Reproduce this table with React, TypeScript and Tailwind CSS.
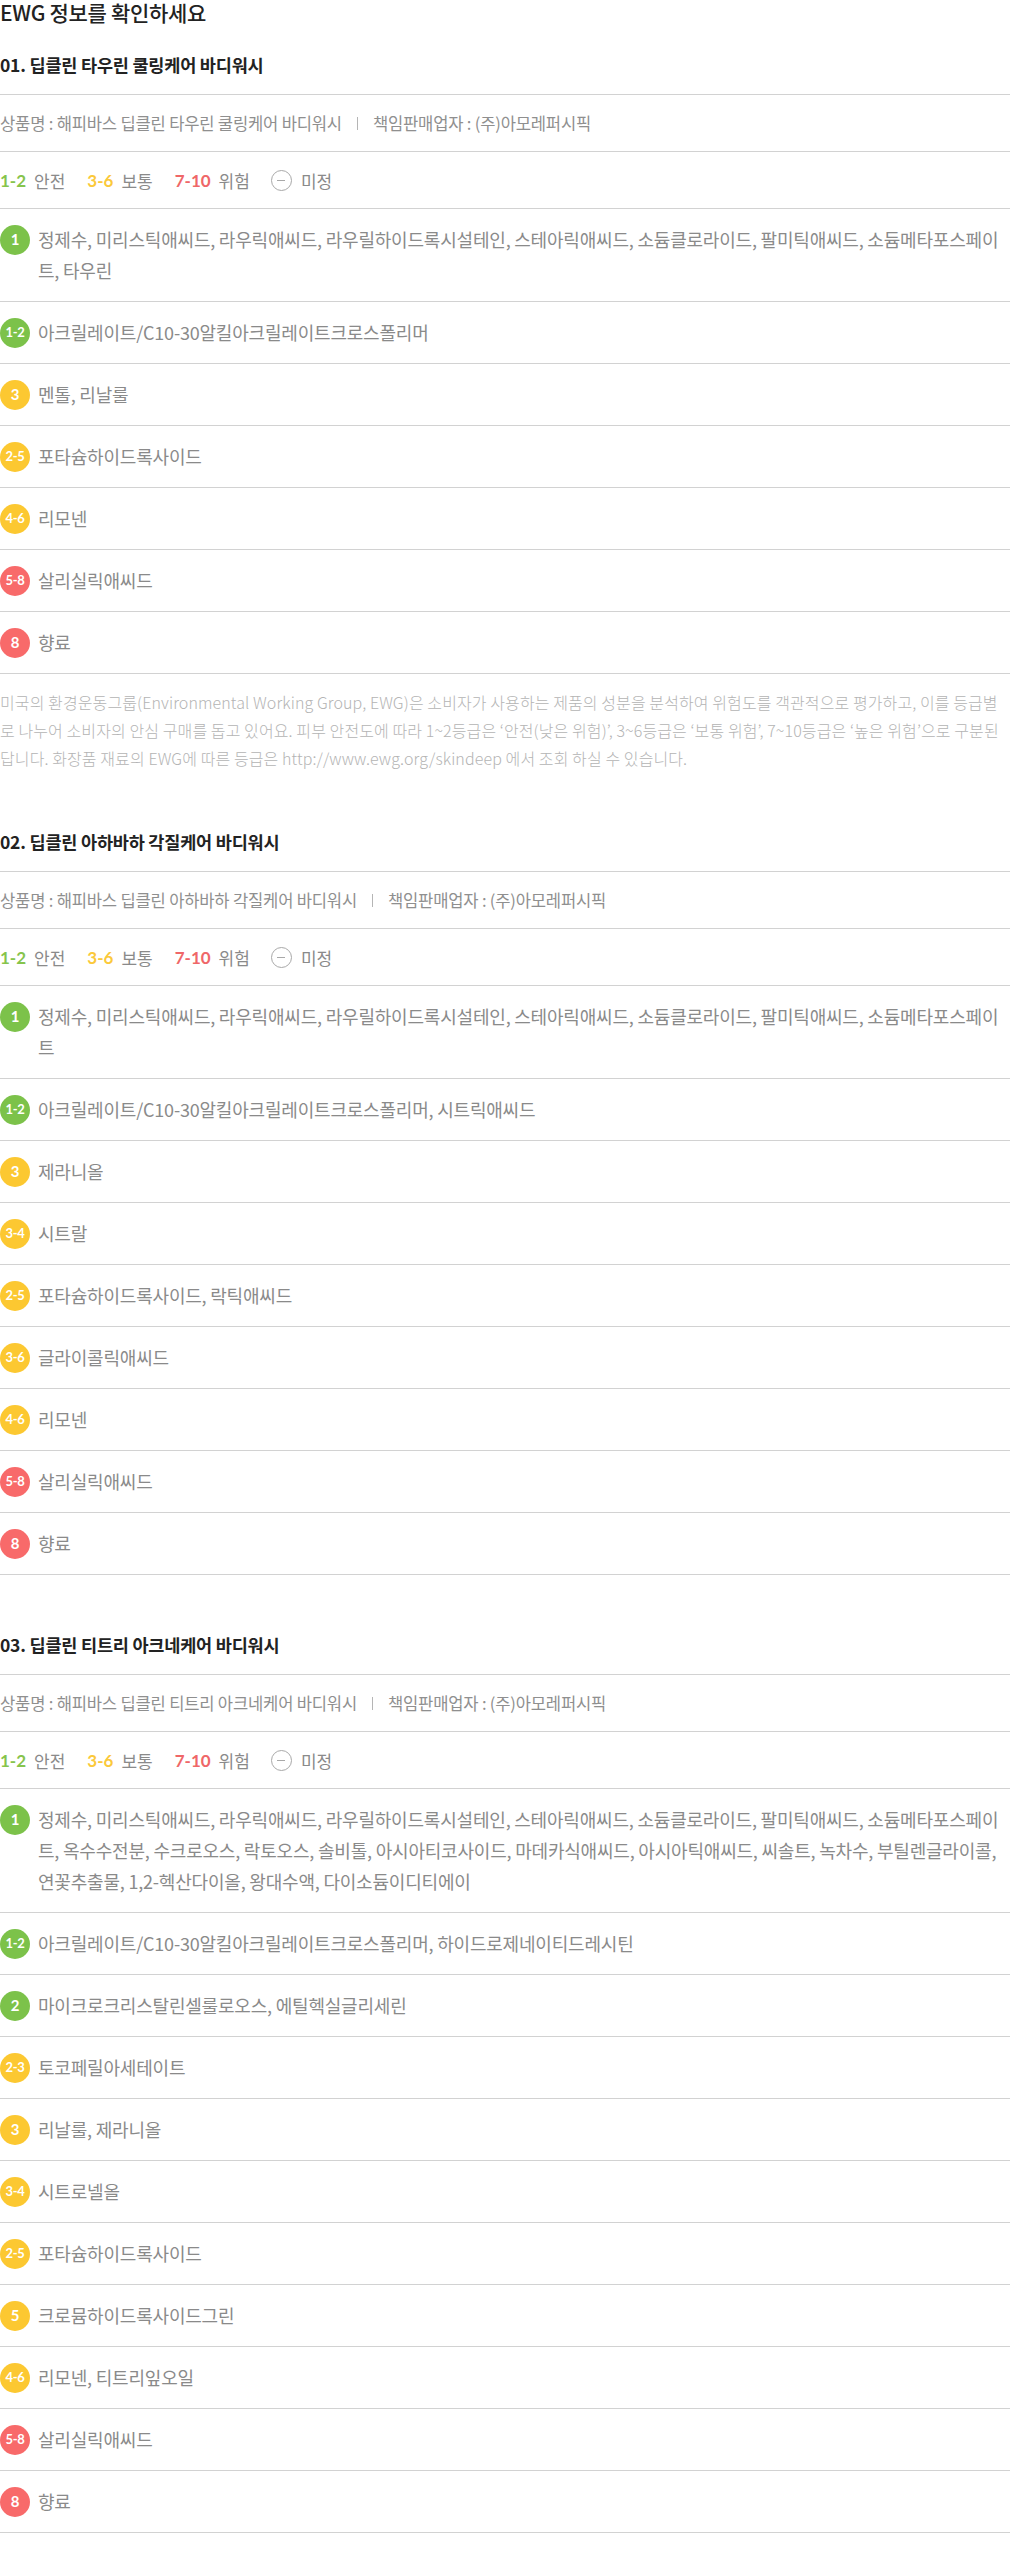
import React from 'react';

type Tone = 'green' | 'yellow' | 'red';

type Ingredient = {
  grade: string;
  tone: Tone;
  names: string;
};

type Product = {
  title: string;
  name: string;
  ingredients: Ingredient[];
  note?: boolean;
};

const base =
  '정제수, 미리스틱애씨드, 라우릭애씨드, 라우릴하이드록시설테인, 스테아릭애씨드, 소듐클로라이드, 팔미틱애씨드, 소듐메타포스페이트';

const products: Product[] = [
  {
    title: '01. 딥클린 타우린 쿨링케어 바디워시',
    name: '해피바스 딥클린 타우린 쿨링케어 바디워시',
    note: true,
    ingredients: [
      { grade: '1', tone: 'green', names: `${base}, 타우린` },
      { grade: '1-2', tone: 'green', names: '아크릴레이트/C10-30알킬아크릴레이트크로스폴리머' },
      { grade: '3', tone: 'yellow', names: '멘톨, 리날룰' },
      { grade: '2-5', tone: 'yellow', names: '포타슘하이드록사이드' },
      { grade: '4-6', tone: 'yellow', names: '리모넨' },
      { grade: '5-8', tone: 'red', names: '살리실릭애씨드' },
      { grade: '8', tone: 'red', names: '향료' },
    ],
  },
  {
    title: '02. 딥클린 아하바하 각질케어 바디워시',
    name: '해피바스 딥클린 아하바하 각질케어 바디워시',
    ingredients: [
      { grade: '1', tone: 'green', names: base },
      { grade: '1-2', tone: 'green', names: '아크릴레이트/C10-30알킬아크릴레이트크로스폴리머, 시트릭애씨드' },
      { grade: '3', tone: 'yellow', names: '제라니올' },
      { grade: '3-4', tone: 'yellow', names: '시트랄' },
      { grade: '2-5', tone: 'yellow', names: '포타슘하이드록사이드, 락틱애씨드' },
      { grade: '3-6', tone: 'yellow', names: '글라이콜릭애씨드' },
      { grade: '4-6', tone: 'yellow', names: '리모넨' },
      { grade: '5-8', tone: 'red', names: '살리실릭애씨드' },
      { grade: '8', tone: 'red', names: '향료' },
    ],
  },
  {
    title: '03. 딥클린 티트리 아크네케어 바디워시',
    name: '해피바스 딥클린 티트리 아크네케어 바디워시',
    ingredients: [
      {
        grade: '1',
        tone: 'green',
        names: `${base}, 옥수수전분, 수크로오스, 락토오스, 솔비톨, 아시아티코사이드, 마데카식애씨드, 아시아틱애씨드, 씨솔트, 녹차수, 부틸렌글라이콜, 연꽃추출물, 1,2-헥산다이올, 왕대수액, 다이소듐이디티에이`,
      },
      { grade: '1-2', tone: 'green', names: '아크릴레이트/C10-30알킬아크릴레이트크로스폴리머, 하이드로제네이티드레시틴' },
      { grade: '2', tone: 'green', names: '마이크로크리스탈린셀룰로오스, 에틸헥실글리세린' },
      { grade: '2-3', tone: 'yellow', names: '토코페릴아세테이트' },
      { grade: '3', tone: 'yellow', names: '리날룰, 제라니올' },
      { grade: '3-4', tone: 'yellow', names: '시트로넬올' },
      { grade: '2-5', tone: 'yellow', names: '포타슘하이드록사이드' },
      { grade: '5', tone: 'yellow', names: '크로뮴하이드록사이드그린' },
      { grade: '4-6', tone: 'yellow', names: '리모넨, 티트리잎오일' },
      { grade: '5-8', tone: 'red', names: '살리실릭애씨드' },
      { grade: '8', tone: 'red', names: '향료' },
    ],
  },
];

const badgeBg: Record<Tone, string> = {
  green: 'bg-[#7cc24a]',
  yellow: 'bg-[#fcc831]',
  red: 'bg-[#f86a6a]',
};

const kr = "font-['Noto_Sans_CJK_KR','Noto_Sans',sans-serif]";
const num = "font-['Lato','Noto_Sans',sans-serif]";

const Legend: React.FC = () => (
  <div className="flex items-center border-b border-[#d2d2d2] pt-[13px] pb-[12px] leading-[31px] text-[17px]">
    <span className={`${num} font-bold text-[#86c44c]`}>1-2</span>
    <span className="ml-[8px] text-[#8a8a8a]">안전</span>
    <span className={`${num} ml-[22px] font-bold text-[#fbc93b]`}>3-6</span>
    <span className="ml-[8px] text-[#8a8a8a]">보통</span>
    <span className={`${num} ml-[22px] font-bold text-[#ef6768]`}>7-10</span>
    <span className="ml-[8px] text-[#8a8a8a]">위험</span>
    <span className="ml-[21px] flex h-[21px] w-[21px] items-center justify-center rounded-full border-[1.5px] border-[#a8a8a8]">
      <span className="h-[1.5px] w-[8px] bg-[#a8a8a8]" />
    </span>
    <span className="ml-[9px] text-[#8a8a8a]">미정</span>
  </div>
);

const Row: React.FC<{ item: Ingredient }> = ({ item }) => (
  <div className="flex items-start gap-[8px] border-b border-[#d2d2d2] py-[15px]">
    <span
      className={`${badgeBg[item.tone]} ${num} mt-[0.5px] flex h-[30px] w-[30px] shrink-0 items-center justify-center rounded-full font-bold text-white ${
        item.grade.length > 1 ? 'text-[13px] tracking-[-0.3px]' : 'text-[15px]'
      }`}
    >
      {item.grade}
    </span>
    <p className="min-w-0 flex-1 leading-[31px] text-[18px] tracking-[-0.2px] text-[#8a8a8a]">{item.names}</p>
  </div>
);

const Section: React.FC<{ product: Product; first?: boolean }> = ({ product, first }) => (
  <section className={first ? 'mt-[29px]' : 'mt-[58px]'}>
    <h3 className="border-b border-[#d2d2d2] pb-[17px] leading-[24px] text-[17.5px] font-bold tracking-[-0.2px] text-[#222]">
      {product.title}
    </h3>
    <div className="flex items-center border-b border-[#d2d2d2] pt-[13px] pb-[12px] leading-[31px] text-[16.6px] tracking-[-0.2px] text-[#8f8f8f]">
      <span>상품명 : {product.name}</span>
      <span className="mx-[15px] h-[13px] w-px bg-[#b5b5b5]" />
      <span>책임판매업자 : (주)아모레퍼시픽</span>
    </div>
    <Legend />
    {product.ingredients.map((item) => (
      <Row key={item.grade + item.names} item={item} />
    ))}
    {product.note && (
      <p className="pt-[14px] leading-[28px] text-[16px] font-light tracking-[0.1px] text-[#b4b4b4]">
        미국의 환경운동그룹(Environmental Working Group, EWG)은 소비자가 사용하는 제품의 성분을 분석하여 위험도를
        객관적으로 평가하고, 이를 등급별로 나누어 소비자의 안심 구매를 돕고 있어요. 피부 안전도에 따라 1~2등급은
        ‘안전(낮은 위험)’, 3~6등급은 ‘보통 위험’, 7~10등급은 ‘높은 위험’으로 구분된답니다. 화장품 재료의 EWG에
        따른 등급은 http://www.ewg.org/skindeep 에서 조회 하실 수 있습니다.
      </p>
    )}
  </section>
);

export default function App() {
  return (
    <div className={`${kr} w-[1010px] min-h-[2564px] bg-white`}>
      <h2 className="leading-[24px] text-[21px] font-medium tracking-[-0.3px] text-[#222]">EWG 정보를 확인하세요</h2>
      {products.map((p, i) => (
        <Section key={p.title} product={p} first={i === 0} />
      ))}
    </div>
  );
}
